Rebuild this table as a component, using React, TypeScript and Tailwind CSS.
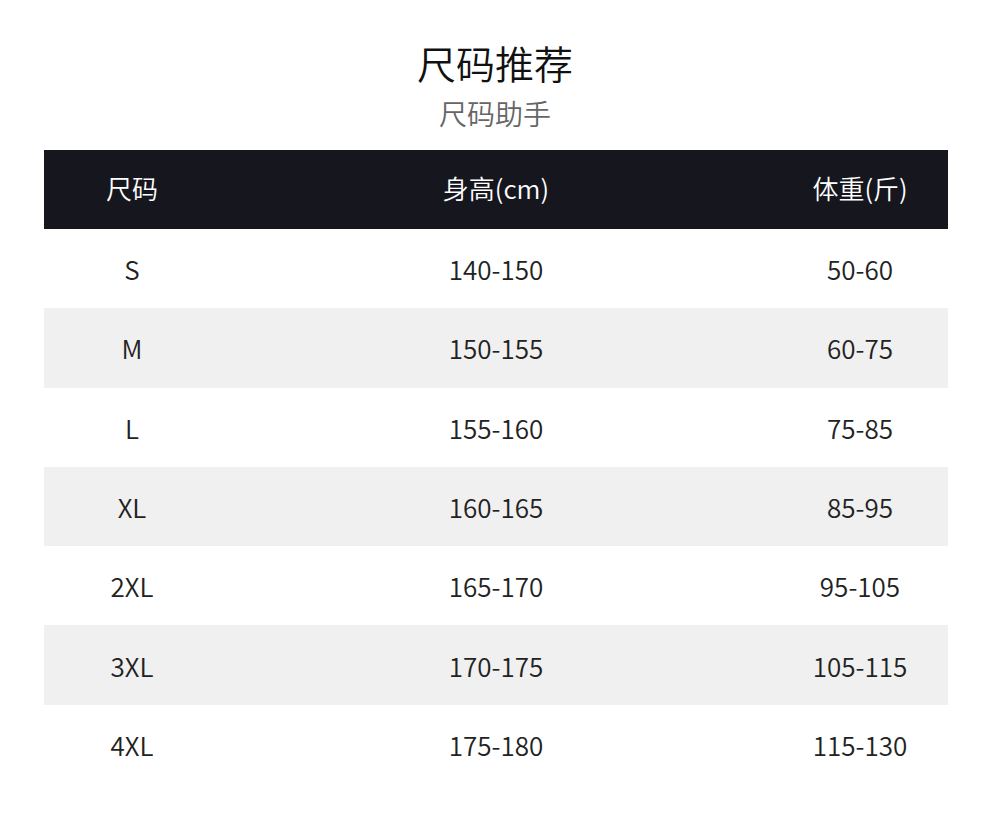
const rows = [
  ["S", "140-150", "50-60"],
  ["M", "150-155", "60-75"],
  ["L", "155-160", "75-85"],
  ["XL", "160-165", "85-95"],
  ["2XL", "165-170", "95-105"],
  ["3XL", "170-175", "105-115"],
  ["4XL", "175-180", "115-130"],
];

export default function App() {
  return (
    <main
      className="min-h-[825px] w-[990px] bg-white pt-[36px]"
      style={{ fontFamily: '"Noto Sans CJK SC", "Noto Sans", sans-serif' }}
    >
      <h1 className="text-center text-[39px] font-[350] leading-[52px] text-[#111]">尺码推荐</h1>
      <p className="mt-[6px] text-center text-[28px] font-[350] leading-[38px] text-[#666]">尺码助手</p>

      <div className="ml-[44px] mt-[18px] w-[904px]">
        <div className="grid h-[79px] grid-cols-[176px_1fr_176px] items-center bg-[#16161e] pb-[5px] text-[26px] font-[350] text-white">
          <div className="text-center">尺码</div>
          <div className="text-center">身高(cm)</div>
          <div className="text-center">体重(斤)</div>
        </div>
        {rows.map((r, i) => (
          <div
            key={r[0]}
            className={`grid h-[79.3px] grid-cols-[176px_1fr_176px] items-center text-[26px] font-[350] text-[#222] ${
              i % 2 === 1 ? "bg-[#f0f0f0]" : "bg-white"
            }`}
          >
            <div className="text-center">{r[0]}</div>
            <div className="text-center">{r[1]}</div>
            <div className="text-center">{r[2]}</div>
          </div>
        ))}
      </div>
    </main>
  );
}
